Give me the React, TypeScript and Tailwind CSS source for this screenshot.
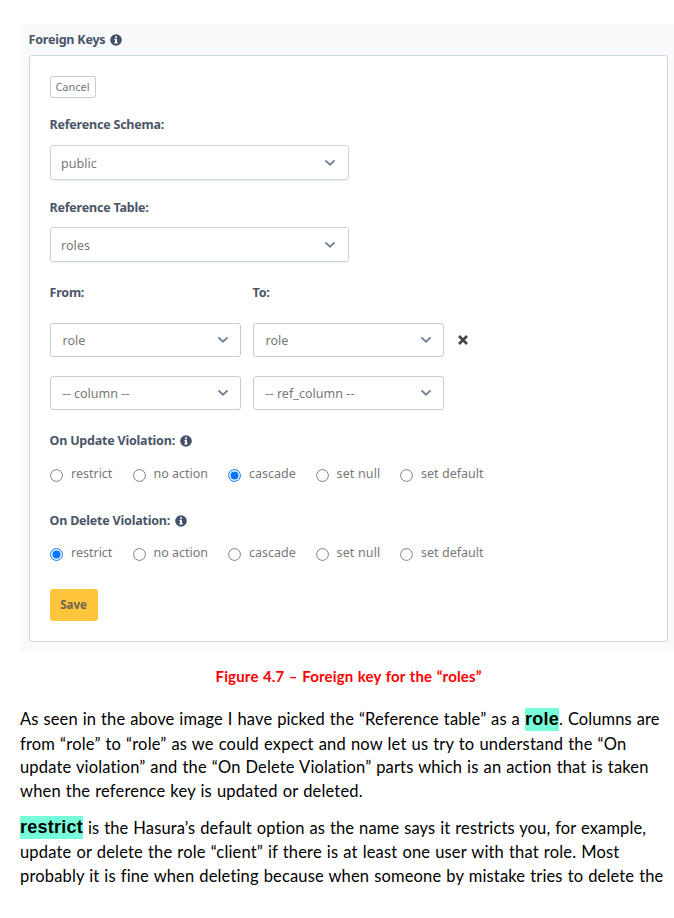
import type { ReactNode } from "react";

function Info() {
  return (
    <svg viewBox="0 0 12 12" className="size-3 shrink-0">
      <circle cx="6" cy="6" r="5.8" fill="#43506a" />
      <path d="M5 2.2h2v1.6H5zM4.4 4.8H7v3.4h.7v1.2H4.3V8.2H5V6h-.6z" fill="#fff" />
    </svg>
  );
}

function Chevron() {
  return (
    <svg viewBox="0 0 12 8" className="h-2 w-3 shrink-0" fill="none" stroke="#718096" strokeWidth="1.9">
      <path d="M1.4 1.4 6 5.8l4.6-4.4" />
    </svg>
  );
}

function Cross() {
  return (
    <svg viewBox="0 0 10 10" className="size-[10px] shrink-0" stroke="#444" strokeWidth="2.6">
      <path d="M1 1l8 8M9 1 1 9" />
    </svg>
  );
}

function Label({ children }: { children: ReactNode }) {
  return (
    <div className="-ml-[0.5px] flex h-5 items-center gap-[5px] text-[12.5px] font-bold tracking-[-0.21px] whitespace-nowrap text-[#4a5568]">
      {children}
    </div>
  );
}

function WideSelect({ value }: { value: string }) {
  return (
    <div className="mt-[9px] flex h-[35px] w-[299px] items-center justify-between rounded-[3px] border border-[#cbd5e0] pr-3 pl-[10px] text-[12.5px] tracking-[0.06px] text-[#777] shadow-xs">
      <span className="pt-[3px]">{value}</span>
      <Chevron />
    </div>
  );
}

function ColumnSelect({ value }: { value: string }) {
  return (
    <div className="flex h-[34px] w-[191px] items-center justify-between rounded-[3px] border border-[#ccc] pr-[11.5px] pl-[11.5px] text-[12.5px] tracking-[0.04px] text-[#777]">
      <span className="pt-[2px]">{value}</span>
      <Chevron />
    </div>
  );
}

const options: [string, string][] = [
  ["restrict", "w-[82.5px]"],
  ["no action", "w-[95.5px]"],
  ["cascade", "w-[87.5px]"],
  ["set null", "w-[84.5px] tracking-[0.16px]"],
  ["set default", "w-[90px] tracking-[0.03px]"],
];

function Radios({ selected }: { selected: string }) {
  return (
    <div className="flex h-5">
      {options.map(([name, style]) => (
        <div key={name} className={"flex items-center gap-2 whitespace-nowrap text-[12.5px] text-[#777] " + style}>
          <svg viewBox="0 0 13 13" className="mt-[3px] size-[13px] shrink-0">
            <circle cx="6.5" cy="6.5" r="5.9" fill="#fff" stroke={name === selected ? "#0075ff" : "#808080"} />
            {name === selected && <circle cx="6.5" cy="6.5" r="4" fill="#0075ff" />}
          </svg>
          <span>{name}</span>
        </div>
      ))}
    </div>
  );
}

const mark = "h-[23px] shrink-0 bg-[#76ffd8] font-['Liberation_Sans',sans-serif] text-[18px] leading-[23px] font-bold tracking-[0.24px] [word-spacing:0]";

export default function App() {
  return (
    <div className="h-[918px] w-[674px] overflow-hidden bg-white pt-6 pl-5">
      <div className="h-[628px] bg-[#f8fafc] pl-[9px] font-['Noto_Sans',sans-serif]">
        <div className="h-[31px] pt-[6px]">
          <Label>Foreign Keys<Info /></Label>
        </div>
        <div className="h-[587px] w-[639px] rounded-[3px] border border-[#cbd5e0] bg-white pt-5 pl-5">
          <div className="flex h-[22px] w-[46px] items-center justify-center rounded-xs border border-[#ccc] pr-px text-[11px] text-[#777]">
            Cancel
          </div>
          <div className="mt-[17px] mb-[10px]"><Label>Reference Schema:</Label></div>
          <WideSelect value="public" />
          <div className="mt-[18px]"><Label>Reference Table:</Label></div>
          <WideSelect value="roles" />
          <div className="mt-[21px] flex">
            <div className="w-[203px]"><Label>From:</Label></div>
            <Label>To:</Label>
          </div>
          <div className="mt-5 flex items-center gap-3">
            <ColumnSelect value="role" />
            <ColumnSelect value="role" />
            <div className="pl-[2px]"><Cross /></div>
          </div>
          <div className="mt-[19px] flex gap-3">
            <ColumnSelect value="-- column --" />
            <ColumnSelect value="-- ref_column --" />
          </div>
          <div className="mt-[21px]"><Label>On Update Violation:<Info /></Label></div>
          <div className="mt-[13px]"><Radios selected="cascade" /></div>
          <div className="mt-[27px]"><Label>On Delete Violation:<Info /></Label></div>
          <div className="mt-[12px]"><Radios selected="restrict" /></div>
          <div className="mt-[26px] flex h-8 w-12 items-center justify-center rounded-[3px] bg-[#ffc53d] pr-px text-[11.5px] font-bold text-[#6b6250]">
            Save
          </div>
        </div>
      </div>
      <div className="pt-3 font-['Lato',sans-serif] text-[16.5px] leading-6 whitespace-pre text-black [word-spacing:0.6px]">
        <div className="mb-[19px] h-6 pl-[195.5px] text-[15px] font-bold tracking-[0.17px] text-[#f00]">
          Figure 4.7 – Foreign key for the “roles”
        </div>
        <div className="flex h-[25px] items-start">
          <span className="w-[505px] shrink-0 tracking-[0.123px]">As seen in the above image I have picked the “Reference table” as a </span>
          <span className={"mt-px w-[34px] " + mark}>role</span>
          <span className="tracking-[0.094px]">. Columns are</span>
        </div>
        <div className="h-[23px] tracking-[0.181px]">from “role” to “role” as we could expect and now let us try to understand the “On</div>
        <div className="h-6 tracking-[0.158px]">update violation” and the “On Delete Violation” parts which is an action that is taken</div>
        <div className="h-[37px] tracking-[0.18px]">when the reference key is updated or deleted.</div>
        <div className="flex h-6 items-start">
          <span className={"w-[63px] " + mark}>restrict</span>
          <span className="tracking-[0.118px]"> is the Hasura’s default option as the name says it restricts you, for example,</span>
        </div>
        <div className="h-6 tracking-[0.176px]">update or delete the role “client” if there is at least one user with that role. Most</div>
        <div className="h-6 tracking-[0.154px]">probably it is fine when deleting because when someone by mistake tries to delete the</div>
      </div>
    </div>
  );
}
